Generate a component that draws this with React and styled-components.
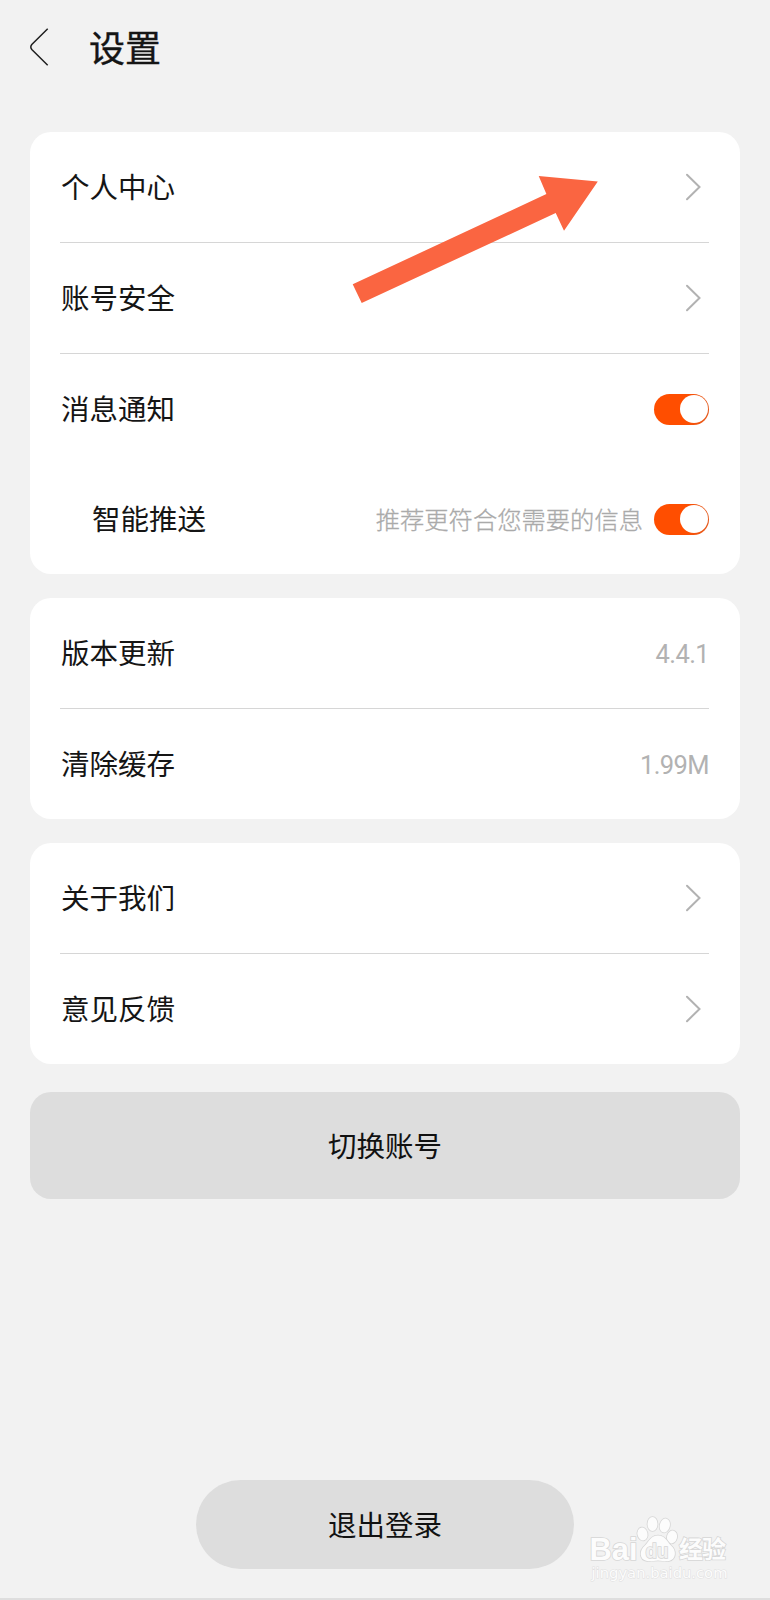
import styled, { createGlobalStyle, css } from "styled-components";

const GlobalStyle = createGlobalStyle`
  * {
    box-sizing: border-box;
  }
  body {
    margin: 0;
    background: #f2f2f2;
    color: #151515;
    font-family: "Noto Sans CJK SC", sans-serif;
  }
`;

const Page = styled.main`
  position: relative;
  display: flex;
  flex-direction: column;
  width: 770px;
  height: 1600px;
  padding: 0 30px 29px;
  border-bottom: 2px solid #dedede;
  overflow: hidden;
`;

const Header = styled.header`
  display: flex;
  align-items: center;
  gap: 40px;
  height: 94px;
  margin-bottom: 38px;
`;

const BackIcon = styled.svg`
  width: 19px;
  height: 40px;
  fill: none;
  stroke: #202020;
  stroke-width: 1.5;
`;

const Title = styled.h1`
  margin: 0;
  padding-bottom: 2px;
  font-size: 36px;
  font-weight: 400;
  line-height: 48px;
  -webkit-text-stroke: 0.4px #151515;
`;

const Groups = styled.div`
  display: flex;
  flex-direction: column;
  gap: 24px;
`;

const Card = styled.section`
  padding: 0 31px 0 30px;
  border-radius: 21px;
  background: #fff;
`;

const Row = styled.div`
  display: flex;
  align-items: center;
  height: 110px;
  padding-left: ${(props) => (props.$sub ? "32px" : "1px")};
  ${(props) =>
    props.$line &&
    css`
      height: 111px;
      border-bottom: 1px solid #d6d6d6;
    `}
`;

const Label = styled.span`
  flex: 1;
  padding-bottom: 2px;
  font-size: 28.5px;
  line-height: 40px;
`;

const Hint = styled.span`
  margin-right: 11px;
  padding-bottom: 2px;
  color: #aaa;
  font-size: 24.3px;
  font-weight: 300;
  -webkit-text-stroke: 0.3px #aaa;
`;

const Value = styled.span`
  padding-top: 1px;
  color: #b2b2b2;
  font-family: Roboto, sans-serif;
  font-size: 25.5px;
  letter-spacing: -0.6px;
`;

const Chevron = styled.svg`
  width: 16px;
  height: 28px;
  margin-right: 8px;
  fill: none;
  stroke: #b2b2b2;
  stroke-width: 2;
  stroke-linecap: round;
`;

const Switch = styled.button`
  display: flex;
  justify-content: flex-end;
  align-items: center;
  width: 55px;
  height: 31px;
  padding: 0 1.5px;
  border: 0;
  border-radius: 16px;
  background: linear-gradient(90deg, #ff4e00 55%, #e4591c);
`;

const Knob = styled.span`
  width: 28px;
  height: 28px;
  border-radius: 50%;
  background: #fff;
`;

const Button = styled.button`
  border: 0;
  background: #ddd;
  color: #111;
  font-family: inherit;
  font-size: 28.5px;
  line-height: 40px;
`;

const SwitchAccount = styled(Button)`
  height: 107px;
  margin-top: 28px;
  padding-bottom: 3px;
  border-radius: 21px;
`;

const Logout = styled(Button)`
  align-self: center;
  width: 378px;
  height: 89px;
  margin-top: auto;
  padding-bottom: 3px;
  border-radius: 45px;
`;

const Pointer = styled.svg`
  position: absolute;
  top: 170px;
  left: 346px;
  width: 260px;
  height: 140px;
  fill: #fa6541;
`;

const Watermark = styled.svg`
  position: absolute;
  left: 580px;
  top: 1510px;
  width: 170px;
  height: 76px;
  fill: #fcfcfc;
  stroke: #d6d6d6;
  stroke-width: 1.6;
  paint-order: stroke;
`;

const groups = [
  [
    { label: "个人中心", line: true },
    { label: "账号安全", line: true },
    { label: "消息通知", toggle: true },
    { label: "智能推送", toggle: true, sub: true, hint: "推荐更符合您需要的信息" },
  ],
  [
    { label: "版本更新", value: "4.4.1", line: true },
    { label: "清除缓存", value: "1.99M" },
  ],
  [{ label: "关于我们", line: true }, { label: "意见反馈" }],
];

const Toggle = () => (
  <Switch role="switch" aria-checked="true">
    <Knob />
  </Switch>
);

const SettingRow = ({ item }) => (
  <Row $line={item.line} $sub={item.sub}>
    <Label>{item.label}</Label>
    {item.hint && <Hint>{item.hint}</Hint>}
    {item.toggle && <Toggle />}
    {item.value && <Value>{item.value}</Value>}
    {!item.toggle && !item.value && (
      <Chevron viewBox="0 0 16 28">
        <path d="M2 1.8 14.5 14 2 26.2" />
      </Chevron>
    )}
  </Row>
);

const BaiduMark = () => (
  <Watermark viewBox="0 0 170 76">
    <text
      x="9.5"
      y="49.5"
      fontFamily="Liberation Sans"
      fontWeight="700"
      fontSize="31"
      textLength="48"
      lengthAdjust="spacingAndGlyphs"
    >
      Bai
    </text>
    <ellipse cx="62.5" cy="24" rx="5" ry="6.5" transform="rotate(-12 62.5 24)" />
    <ellipse cx="72.5" cy="14" rx="5" ry="7" />
    <ellipse cx="84.8" cy="15.5" rx="5" ry="7" transform="rotate(14 84.8 15.5)" />
    <ellipse cx="92" cy="27" rx="5" ry="6.5" transform="rotate(14 92 27)" />
    <path d="M78 25.5c7 0 9 6 13 10 6 5 5 14-2 15.500-4 .7-7-.6-11-.6s-7 1.300-11 .6c-8-1.500-8-10.500-2-15.500 4-4 6-10 13-10Z" />
    <text
      x="65.5"
      y="47.5"
      fontFamily="Liberation Sans"
      fontWeight="700"
      fontSize="21"
      textLength="23"
      lengthAdjust="spacingAndGlyphs"
      fill="#f2f2f2"
    >
      du
    </text>
    <text x="99" y="47.5" fontFamily="Noto Sans CJK SC" fontWeight="700" fontSize="24" textLength="47">
      经验
    </text>
    <text
      x="11.5"
      y="67.5"
      fontFamily="DejaVu Sans"
      fontSize="14.5"
      strokeWidth="1"
      stroke="#dfdfdf"
      textLength="136"
      lengthAdjust="spacingAndGlyphs"
    >
      jingyan.baidu.com
    </text>
  </Watermark>
);

const App = () => {
  return (
    <>
      <GlobalStyle />
      <Page>
        <Header>
          <BackIcon viewBox="0 0 19 40">
            <path d="M17.7 1.8 1.8 17.5Q-.2 20 1.8 22.5L17.7 38.2" />
          </BackIcon>
          <Title>设置</Title>
        </Header>
        <Groups>
          {groups.map((items, index) => (
            <Card key={index}>
              {items.map((item) => (
                <SettingRow key={item.label} item={item} />
              ))}
            </Card>
          ))}
        </Groups>
        <SwitchAccount>切换账号</SwitchAccount>
        <Logout>退出登录</Logout>
        <Pointer viewBox="346 170 260 140">
          <path d="M597.8 181.4 538.7 176 546.4 194 352.7 284.3 361.7 303 555.7 213 564 230.7Z" />
        </Pointer>
        <BaiduMark />
      </Page>
    </>
  );
};

export default App;
